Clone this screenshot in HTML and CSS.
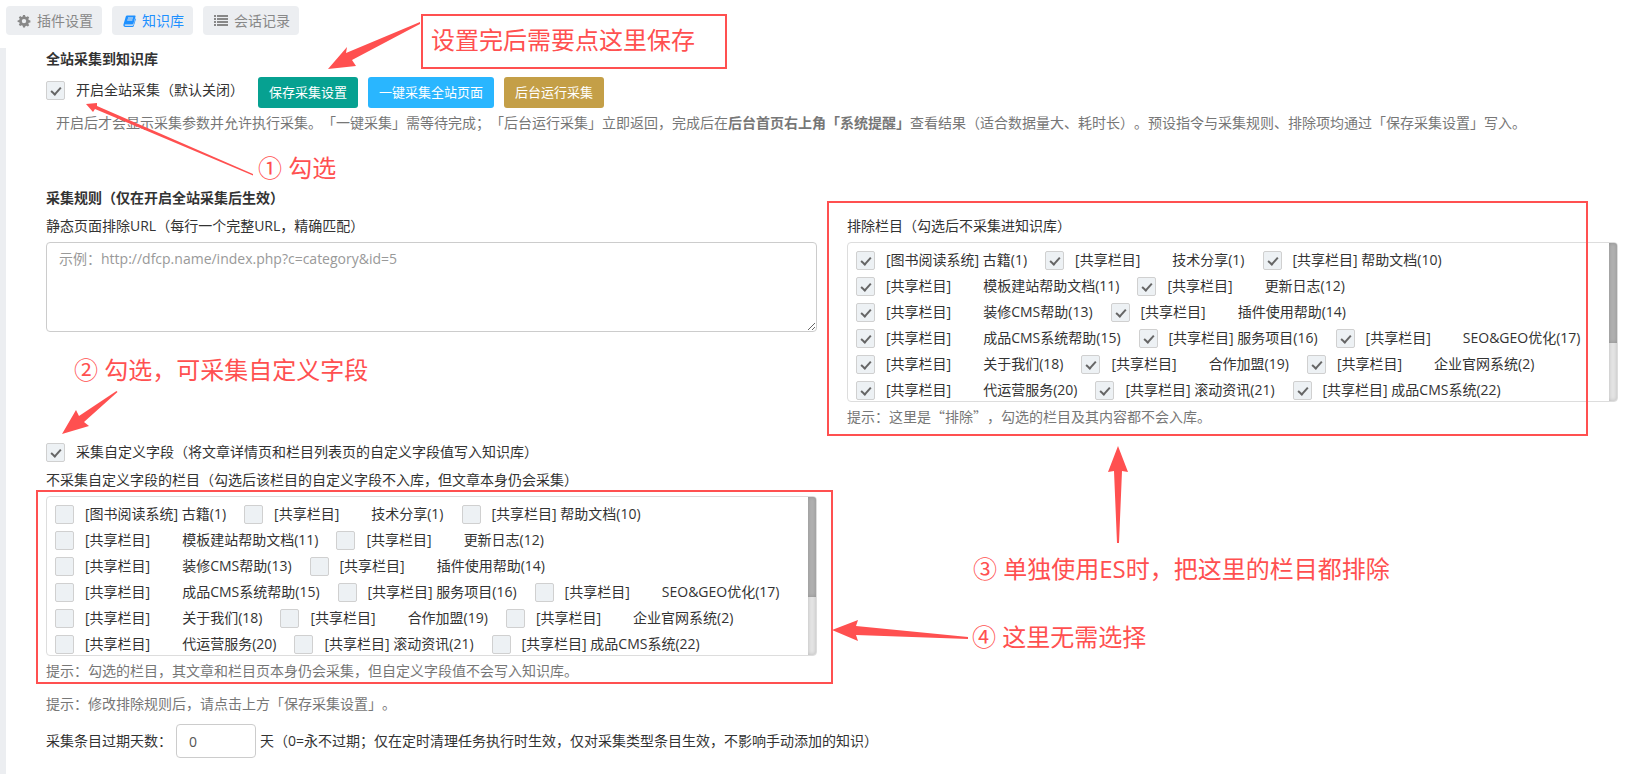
FILE: index.html
```html
<!DOCTYPE html>
<html lang="zh-CN">
<head>
<meta charset="UTF-8">
<title>知识库</title>
<link rel="stylesheet" href="styles.css">
</head>
<body>
<nav class="tabs">
    <a href="#" class="tab">
        <svg class="icon" viewBox="0 0 14 14"><path fill="currentColor" fill-rule="evenodd" d="M6 1h2l.3 1.6 1.2.5 1.3-.9 1.4 1.4-.9 1.3.5 1.2 1.6.3v2l-1.6.3-.5 1.1.9 1.4-1.4 1.4-1.3-.9-1.2.5L8 13.400H6l-.3-1.700-1.200-.5-1.300.9-1.400-1.400.9-1.400-.5-1.100L.6 8V6.400L2.200 6l.5-1.200-.9-1.300 1.400-1.400 1.300.9 1.200-.5zM7 4.900a2.200 2.200 0 1 0 0 4.400 2.200 2.200 0 0 0 0-4.400z"/></svg>
        插件设置</a>
    <a href="#" class="tab active">
        <svg class="icon book" viewBox="0 0 14 14"><path fill="currentColor" fill-rule="evenodd" d="M4.500 1h8c.8 0 1.200.5 1 1.200l-2.200 7.600c-.2.600-.6.900-1.200.9H2.500c-.6 0-.9.300-.7.700.1.400.5.600 1 .6h7.400c.5 0 .8-.2 1-.7L13.400 4c.5.300.6.700.4 1.300l-2.200 7c-.2.700-.7 1.100-1.400 1.100H2.600C1 13.400.1 12.100.5 10.800L3 2.200C3.200 1.400 3.700 1 4.500 1zM5.400 3.300 5.100 4.200h5.600l.3-.9zM4.700 5.500l-.3.900H10l.3-.9z"/></svg>
        知识库</a>
    <a href="#" class="tab">
        <svg class="icon" viewBox="0 0 14 14"><path fill="currentColor" d="M0 1h2v2H0zM3 1h11v2H3zM0 4h2v2H0zM3 4h11v2H3zM0 7h2v2H0zM3 7h11v2H3zM0 10h2v2H0zM3 10h11v2H3z"/></svg>
        会话记录</a>
</nav>

<main class="panel">
    <h4 class="title">全站采集到知识库</h4>
    <div class="toolbar">
        <label class="check"><input type="checkbox" checked>开启全站采集（默认关闭）</label>
        <button type="button" class="btn green">保存采集设置</button>
        <button type="button" class="btn blue">一键采集全站页面</button>
        <button type="button" class="btn gold">后台运行采集</button>
    </div>
    <p class="help intro">开启后才会显示采集参数并允许执行采集。「一键采集」需等待完成；「后台运行采集」立即返回，完成后在<b>后台首页右上角「系统提醒」</b>查看结果（适合数据量大、耗时长）。预设指令与采集规则、排除项均通过「保存采集设置」写入。</p>

    <h4 class="title rules">采集规则（仅在开启全站采集后生效）</h4>
    <div class="columns">
        <div class="column">
            <label class="caption" for="urls">静态页面排除URL（每行一个完整URL，精确匹配）</label>
            <textarea id="urls" class="urls" placeholder="示例：http://dfcp.name/index.php?c=category&amp;id=5"></textarea>
        </div>
        <div class="column">
            <div class="caption">排除栏目（勾选后不采集进知识库）</div>
            <div class="listbox">
                <div class="list">
                    <div class="line">
                        <label class="check"><input type="checkbox" checked>[图书阅读系统] 古籍(1)</label>
                        <label class="check"><input type="checkbox" checked>[共享栏目]<span class="child">技术分享(1)</span></label>
                        <label class="check"><input type="checkbox" checked>[共享栏目] 帮助文档(10)</label>
                    </div>
                    <div class="line">
                        <label class="check"><input type="checkbox" checked>[共享栏目]<span class="child">模板建站帮助文档(11)</span></label>
                        <label class="check"><input type="checkbox" checked>[共享栏目]<span class="child">更新日志(12)</span></label>
                    </div>
                    <div class="line">
                        <label class="check"><input type="checkbox" checked>[共享栏目]<span class="child">装修CMS帮助(13)</span></label>
                        <label class="check"><input type="checkbox" checked>[共享栏目]<span class="child">插件使用帮助(14)</span></label>
                    </div>
                    <div class="line">
                        <label class="check"><input type="checkbox" checked>[共享栏目]<span class="child">成品CMS系统帮助(15)</span></label>
                        <label class="check"><input type="checkbox" checked>[共享栏目] 服务项目(16)</label>
                        <label class="check"><input type="checkbox" checked>[共享栏目]<span class="child">SEO&amp;GEO优化(17)</span></label>
                    </div>
                    <div class="line">
                        <label class="check"><input type="checkbox" checked>[共享栏目]<span class="child">关于我们(18)</span></label>
                        <label class="check"><input type="checkbox" checked>[共享栏目]<span class="child">合作加盟(19)</span></label>
                        <label class="check"><input type="checkbox" checked>[共享栏目]<span class="child">企业官网系统(2)</span></label>
                    </div>
                    <div class="line">
                        <label class="check"><input type="checkbox" checked>[共享栏目]<span class="child">代运营服务(20)</span></label>
                        <label class="check"><input type="checkbox" checked>[共享栏目] 滚动资讯(21)</label>
                        <label class="check"><input type="checkbox" checked>[共享栏目] 成品CMS系统(22)</label>
                    </div>
                </div>
                <div class="scrollbar"><div class="thumb"></div></div>
            </div>
            <p class="help">提示：这里是<span class="quoted">“排除”</span>，勾选的栏目及其内容都不会入库。</p>
        </div>
    </div>

    <div class="columns">
        <div class="column">
            <label class="check fields"><input type="checkbox" checked>采集自定义字段（将文章详情页和栏目列表页的自定义字段值写入知识库）</label>
            <div class="caption">不采集自定义字段的栏目（勾选后该栏目的自定义字段不入库，但文章本身仍会采集）</div>
            <div class="listbox">
                <div class="list">
                    <div class="line">
                        <label class="check"><input type="checkbox">[图书阅读系统] 古籍(1)</label>
                        <label class="check"><input type="checkbox">[共享栏目]<span class="child">技术分享(1)</span></label>
                        <label class="check"><input type="checkbox">[共享栏目] 帮助文档(10)</label>
                    </div>
                    <div class="line">
                        <label class="check"><input type="checkbox">[共享栏目]<span class="child">模板建站帮助文档(11)</span></label>
                        <label class="check"><input type="checkbox">[共享栏目]<span class="child">更新日志(12)</span></label>
                    </div>
                    <div class="line">
                        <label class="check"><input type="checkbox">[共享栏目]<span class="child">装修CMS帮助(13)</span></label>
                        <label class="check"><input type="checkbox">[共享栏目]<span class="child">插件使用帮助(14)</span></label>
                    </div>
                    <div class="line">
                        <label class="check"><input type="checkbox">[共享栏目]<span class="child">成品CMS系统帮助(15)</span></label>
                        <label class="check"><input type="checkbox">[共享栏目] 服务项目(16)</label>
                        <label class="check"><input type="checkbox">[共享栏目]<span class="child">SEO&amp;GEO优化(17)</span></label>
                    </div>
                    <div class="line">
                        <label class="check"><input type="checkbox">[共享栏目]<span class="child">关于我们(18)</span></label>
                        <label class="check"><input type="checkbox">[共享栏目]<span class="child">合作加盟(19)</span></label>
                        <label class="check"><input type="checkbox">[共享栏目]<span class="child">企业官网系统(2)</span></label>
                    </div>
                    <div class="line">
                        <label class="check"><input type="checkbox">[共享栏目]<span class="child">代运营服务(20)</span></label>
                        <label class="check"><input type="checkbox">[共享栏目] 滚动资讯(21)</label>
                        <label class="check"><input type="checkbox">[共享栏目] 成品CMS系统(22)</label>
                    </div>
                </div>
                <div class="scrollbar"><div class="thumb"></div></div>
            </div>
            <p class="help">提示：勾选的栏目，其文章和栏目页本身仍会采集，但自定义字段值不会写入知识库。</p>
        </div>
    </div>

    <p class="help save-tip">提示：修改排除规则后，请点击上方「保存采集设置」。</p>
    <div class="expire">
        <label for="days">采集条目过期天数：</label>
        <input type="text" id="days" class="days" value="0">
        <span>天（0=永不过期；仅在定时清理任务执行时生效，仅对采集类型条目生效，不影响手动添加的知识）</span>
    </div>
</main>

<!-- red marks over the page -->
<svg class="arrows" width="1638" height="774" viewBox="0 0 1638 774">
    <path d="M420 22 346 53 347 47 328 69 356 66 352 60 420 24z"/>
    <path d="M253 174 97 106 97 103 86 104 93 112 95 109 253 175.500z"/>
    <path d="M116.500 391 79 416 76 410 62 434 89 426 84 422 117.500 392z"/>
    <path d="M1117 543 1114 471 1108 472 1118 446 1128 472 1122 471 1119 543z"/>
    <path d="M968 637 856 626 858 620 832 630 858 641 856 635 968 639z"/>
</svg>
<div class="frame frame-save">设置完后需要点这里保存</div>
<div class="frame frame-exclude"></div>
<div class="frame frame-fields"></div>
<div class="note note-1">① 勾选</div>
<div class="note note-2">② 勾选，可采集自定义字段</div>
<div class="note note-3">③ 单独使用ES时，把这里的栏目都排除</div>
<div class="note note-4">④ 这里无需选择</div>
</body>
</html>
```
FILE: styles.css
```css
* {
    box-sizing: border-box;
}

body {
    position: relative;
    margin: 0;
    background: #fff;
    color: #333;
    font: 14px/20px "Open Sans", "Noto Sans CJK SC", sans-serif;
    text-spacing-trim: space-all;
}

h4, p {
    margin: 0;
}

.tabs {
    display: flex;
    gap: 10px;
    padding: 6px 6px 13px;
}

.tab {
    display: flex;
    align-items: center;
    gap: 6px;
    height: 29px;
    padding: 0 9px 0 11px;
    border-radius: 4px;
    background: #eceef1;
    color: #888;
    text-decoration: none;
}

.tab.active {
    color: #1e90ff;
}

.icon {
    width: 14px;
    height: 14px;
}

.book {
    width: 13px;
}

.panel {
    min-height: 726px;
    padding: 1px 20px 16px 40px;
    border-left: 6px solid #eceef1;
}

.title {
    font-size: 14px;
    line-height: 20px;
    font-weight: bold;
}

.toolbar {
    display: flex;
    align-items: flex-start;
    gap: 10px;
    margin-top: 8px;
}

.toolbar .check {
    margin-right: 4px;
    padding-top: 3px;
}

.check {
    display: flex;
    align-items: center;
    white-space: pre;
}

.check input {
    flex: none;
    appearance: none;
    width: 19px;
    height: 19px;
    margin: 0 11px 0 0;
    border: 1px solid #d0d0d0;
    border-radius: 2px;
    background: #edf1f4;
}

.check input:checked::before {
    content: "";
    display: block;
    box-sizing: border-box;
    width: 6px;
    height: 10px;
    margin: 3px 0 0 6px;
    border: solid #666;
    border-width: 0 2px 2px 0;
    transform: rotate(42deg);
}

.btn {
    height: 31px;
    padding: 0 11px 2px;
    border: 0;
    border-radius: 3px;
    color: #fff;
    font: 13px/18px "Open Sans", "Noto Sans CJK SC", sans-serif;
}

.green { background: #06a191; }
.blue { background: #29b6ff; }
.gold { background: #c49f47; }

.help {
    color: #777;
    line-height: 20px;
}

.quoted {
    font-family: "Noto Sans CJK SC", sans-serif;
    line-height: 1;
}

.intro {
    margin: 5px 0 0 10px;
}

.rules {
    margin: 55px 0 8px;
}

.columns {
    display: grid;
    grid-template-columns: 1fr 1fr;
    gap: 30px;
}

.caption {
    display: block;
    margin-bottom: 6px;
}

.urls {
    display: block;
    width: 100%;
    height: 90px;
    padding: 6px 12px;
    border: 1px solid #ccc;
    border-radius: 4px;
    font: inherit;
}

.urls::placeholder {
    color: #999;
}

.listbox {
    display: flex;
    height: 160px;
    margin-bottom: 5px;
    border: 1px solid #ddd;
    border-radius: 4px;
    overflow: hidden;
}

.list {
    flex: 1;
    padding: 4px 8px;
}

.line {
    display: flex;
    gap: 18px;
    height: 26px;
}

.child {
    margin-left: 32px;
}

.scrollbar {
    width: 8px;
    background: #e6e6e6;
    box-shadow: inset 0 0 4px rgba(0, 0, 0, .2);
}

.thumb {
    height: 100px;
    background: #b2b2b2;
    box-shadow: inset 0 0 4px rgba(0, 0, 0, .2);
}

.fields {
    margin: 15px 0 8px;
}

.save-tip {
    margin-top: 13px;
}

.expire {
    display: flex;
    align-items: center;
    gap: 4px;
    margin-top: 10px;
}

.days {
    width: 80px;
    height: 34px;
    padding: 0 12px;
    border: 1px solid #ccc;
    border-radius: 4px;
    color: #555;
    font: inherit;
}

/* red marks */
.arrows {
    position: absolute;
    top: 0;
    left: 0;
    fill: #ff5050;
    pointer-events: none;
}

.frame {
    position: absolute;
    border: 2px solid #ff5050;
    pointer-events: none;
}

.frame,
.note {
    color: #ff5050;
    font-size: 24px;
    line-height: 32px;
    white-space: nowrap;
}

.note {
    position: absolute;
}

.frame-save {
    top: 14px;
    left: 421px;
    width: 306px;
    height: 55px;
    padding: 8px;
}

.frame-exclude {
    top: 201px;
    left: 827px;
    width: 761px;
    height: 235px;
}

.frame-fields {
    top: 490px;
    left: 36px;
    width: 797px;
    height: 194px;
}

.note-1 { top: 152px; left: 258px; }
.note-2 { top: 354px; left: 74px; }
.note-3 { top: 553px; left: 973px; }
.note-4 { top: 621px; left: 972px; }
```
